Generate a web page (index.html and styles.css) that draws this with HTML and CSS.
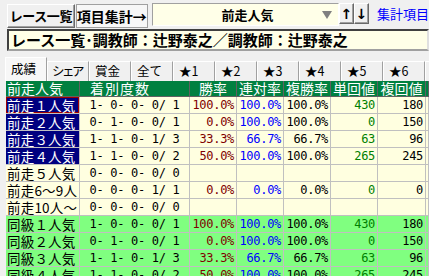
FILE: index.html
```html
<!DOCTYPE html>
<html lang="ja">
<head>
<meta charset="utf-8">
<link rel="stylesheet" href="styles.css">
</head>
<body>
<div class="toolbar">
  <button class="btn btn-race">レース一覧</button>
  <button class="btn btn-item">項目集計→</button>
  <div class="combo"><span class="combo-text">前走人気</span><span class="combo-arrow"></span></div>
  <button class="btn-arrow">↑</button><button class="btn-arrow">↓</button>
  <span class="link">集計項目</span>
</div>
<div class="title">レース一覧･調教師：辻野泰之／調教師：辻野泰之</div>
<div class="tabs">
  <div class="tab active">成績</div>
  <div class="tab tab-narrow">シェア</div>
  <div class="tab">賞金</div>
  <div class="tab">全て</div>
  <div class="tab">★1</div>
  <div class="tab">★2</div>
  <div class="tab">★3</div>
  <div class="tab">★4</div>
  <div class="tab">★5</div>
  <div class="tab">★6</div>
  <div class="tab tab-last"></div>
</div>
<div class="grid">
  <div class="h h-label">前走人気</div><div class="h h-count">着別度数</div><div class="h">勝率</div><div class="h">連対率</div><div class="h">複勝率</div><div class="h">単回値</div><div class="h">複回値</div><div class="h"></div>

  <div class="c lbl navy sel">前走１人気</div><div class="c cnt">1- 0- 0- 0/ 1</div><div class="c num win">100.0%</div><div class="c num ren">100.0%</div><div class="c num fuku">100.0%</div><div class="c num tan">430</div><div class="c num fk">180</div><div class="c"></div>

  <div class="c lbl navy">前走２人気</div><div class="c cnt">0- 1- 0- 0/ 1</div><div class="c num win">0.0%</div><div class="c num ren">100.0%</div><div class="c num fuku">100.0%</div><div class="c num tan">0</div><div class="c num fk">150</div><div class="c"></div>

  <div class="c lbl navy">前走３人気</div><div class="c cnt">1- 1- 0- 1/ 3</div><div class="c num win">33.3%</div><div class="c num ren">66.7%</div><div class="c num fuku">66.7%</div><div class="c num tan">63</div><div class="c num fk">96</div><div class="c"></div>

  <div class="c lbl navy">前走４人気</div><div class="c cnt">1- 1- 0- 0/ 2</div><div class="c num win">50.0%</div><div class="c num ren">100.0%</div><div class="c num fuku">100.0%</div><div class="c num tan">265</div><div class="c num fk">245</div><div class="c"></div>

  <div class="c lbl">前走５人気</div><div class="c cnt">0- 0- 0- 0/ 0</div><div class="c"></div><div class="c"></div><div class="c"></div><div class="c"></div><div class="c"></div><div class="c"></div>

  <div class="c lbl">前走6〜9人</div><div class="c cnt">0- 0- 0- 1/ 1</div><div class="c num win">0.0%</div><div class="c num ren">0.0%</div><div class="c num fuku">0.0%</div><div class="c num tan">0</div><div class="c num fk">0</div><div class="c"></div>

  <div class="c lbl">前走10人〜</div><div class="c cnt">0- 0- 0- 0/ 0</div><div class="c"></div><div class="c"></div><div class="c"></div><div class="c"></div><div class="c"></div><div class="c"></div>

  <div class="c g lbl">同級１人気</div><div class="c g cnt">1- 0- 0- 0/ 1</div><div class="c g num win">100.0%</div><div class="c g num ren">100.0%</div><div class="c g num fuku">100.0%</div><div class="c g num tan">430</div><div class="c g num fk">180</div><div class="c g"></div>

  <div class="c g lbl">同級２人気</div><div class="c g cnt">0- 1- 0- 0/ 1</div><div class="c g num win">0.0%</div><div class="c g num ren">100.0%</div><div class="c g num fuku">100.0%</div><div class="c g num tan">0</div><div class="c g num fk">150</div><div class="c g"></div>

  <div class="c g lbl">同級３人気</div><div class="c g cnt">1- 1- 0- 1/ 3</div><div class="c g num win">33.3%</div><div class="c g num ren">66.7%</div><div class="c g num fuku">66.7%</div><div class="c g num tan">63</div><div class="c g num fk">96</div><div class="c g"></div>

  <div class="c g lbl">同級４人気</div><div class="c g cnt">1- 1- 0- 0/ 2</div><div class="c g num win">50.0%</div><div class="c g num ren">100.0%</div><div class="c g num fuku">100.0%</div><div class="c g num tan">265</div><div class="c g num fk">245</div><div class="c g"></div>
</div>
</body>
</html>
```

FILE: styles.css
```css
* { box-sizing: border-box; margin: 0; padding: 0; }
html, body { width: 429px; height: 276px; overflow: hidden; }
body {
  background: #f0f0f0;
  font-family: "Noto Sans CJK JP", sans-serif;
  color: #000;
}

.toolbar {
  display: flex;
  align-items: flex-start;
  height: 29px;
  padding: 3px 0 0 7px;
  white-space: nowrap;
  overflow: hidden;
}
.btn {
  height: 24px;
  margin-top: 1px;
  font-family: "Noto Sans CJK JP", sans-serif;
  font-weight: bold;
  font-size: 14px;
  line-height: 20px;
  color: #000;
  background: #f0f0f0;
  border: 1px solid;
  border-color: #ffffff #696969 #696969 #ffffff;
  box-shadow: inset -1px -1px 0 #a0a0a0;
  padding: 0;
}
.btn-race { width: 72px; font-size: 13px; letter-spacing: -0.4px; }
.btn-item { width: 77px; margin-left: 1px; background: #f7f7f7; border-color: #a0a0a0; box-shadow: none; }
.combo {
  display: flex;
  align-items: center;
  flex: none;
  width: 187px;
  height: 23px;
  margin-left: 4px;
  background: #ffffe8;
  border: 1px solid;
  border-color: #a0a0a0 #ffffff #ffffff #a0a0a0;
}
.combo-text {
  flex: 1;
  padding-left: 20px;
  text-align: center;
  font-weight: bold;
  font-size: 13px;
  line-height: 18px;
}
.combo-arrow {
  width: 0;
  height: 0;
  margin-right: 6px;
  border-left: 5px solid transparent;
  border-right: 5px solid transparent;
  border-top: 8px solid #808080;
}
.btn-arrow {
  flex: none;
  width: 15px;
  height: 21px;
  font-family: "DejaVu Sans", sans-serif;
  font-weight: bold;
  font-size: 14px;
  line-height: 18px;
  color: #000;
  background: #f0f0f0;
  border: 1px solid;
  border-color: #ffffff #696969 #696969 #ffffff;
  box-shadow: inset -1px -1px 0 #a0a0a0;
  padding: 0;
}
.btn-arrow:first-of-type { margin-left: 4px; }
.link {
  flex: none;
  margin-left: 8px;
  margin-top: 2px;
  font-size: 13px;
  line-height: 18px;
  color: #0000ff;
}

.title {
  height: 22px;
  margin-left: 7px;
  padding-left: 2px;
  background: #ffffe8;
  border: 2px solid;
  border-color: #404040 #e0e0e0 #a0a0a0 #404040;
  font-weight: bold;
  font-size: 15px;
  line-height: 18px;
  white-space: nowrap;
  overflow: hidden;
}

.tabs {
  display: flex;
  align-items: flex-end;
  height: 24px;
  margin-top: 6px;
  padding-left: 5px;
  white-space: nowrap;
  overflow: hidden;
}
.tab {
  width: 42px;
  height: 20px;
  flex: none;
  padding-left: 5px;
  font-size: 12.5px;
  line-height: 18px;
  background: #f0f0f0;
  border: 1px solid;
  border-bottom: none;
  border-color: #ffffff #a0a0a0 transparent #ffffff;
}
.tab-narrow { letter-spacing: -2.5px; padding-left: 4px; }
.tab-last { width: 8px; }
.tab.active {
  width: 42px;
  height: 24px;
  background: #f7f7f7;
  line-height: 22px;
}

.grid {
  display: grid;
  grid-template-columns: 74px 110px 47px 47px 47px 47px 48px 3px;
  grid-template-rows: 16px;
  grid-auto-rows: 17px;
  margin-left: 6px;
  white-space: nowrap;
}
.h {
  background: #008040;
  color: #ffffff;
  font-size: 14px;
  line-height: 15px;
  text-align: center;
  border-right: 1px solid #606060;
  border-bottom: 1px solid #606060;
}
.h-label { text-align: left; padding-left: 1px; }
.h-count { text-align: left; padding-left: 10px; letter-spacing: 1px; }

.c {
  background: #ffffe0;
  border-right: 1px solid #c0c0c0;
  border-bottom: 1px solid #c0c0c0;
}
.c.g { background: #80ff80; }
.lbl {
  font-size: 13.5px;
  line-height: 16px;
  padding-left: 1px;
  letter-spacing: 0.2px;
}
.navy { background: #000080; color: #ffffff; }
.sel { box-shadow: inset 0 0 0 1px #a00000; }
.cnt, .num {
  font-family: "DejaVu Sans Mono", monospace;
  font-size: 12px;
  letter-spacing: -0.3px;
  line-height: 16px;
}
.cnt { text-align: center; }
.num { text-align: right; padding-right: 2px; }
.win { color: #800000; }
.ren { color: #0000ff; }
.fuku { color: #000000; }
.tan { color: #008000; }
.fk { color: #000000; }
```
